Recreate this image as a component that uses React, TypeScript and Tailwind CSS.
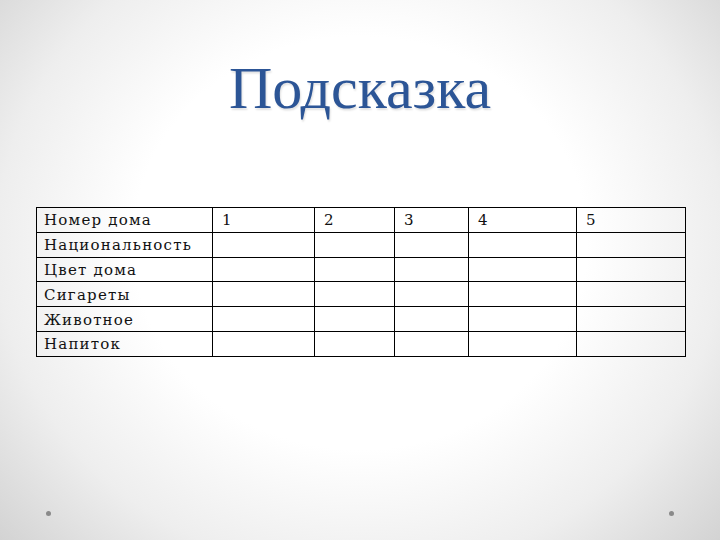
const rows = ['Номер дома', 'Национальность', 'Цвет дома', 'Сигареты', 'Животное', 'Напиток']
const head = ['1', '2', '3', '4', '5']
const widths = ['w-[176px]', 'w-[102px]', 'w-[80px]', 'w-[74px]', 'w-[108px]', 'w-[109px]']

const cell = "border border-black align-middle pt-[2px] font-['DejaVu_Serif',serif] text-[15px] leading-none tracking-[1.2px] text-[#111]"

export default function App() {
  return (
    <div className="relative flex h-[540px] w-[720px] flex-col overflow-hidden bg-[radial-gradient(ellipse_70%_85%_at_50%_45%,#ffffff_45%,#eeeeee_72%,#cfcfcf_100%)] font-['Liberation_Serif',serif]">
      <h1 className="mt-[56px] text-center text-[60px] leading-[64px] text-[#2c5596] [text-shadow:1px_2px_2px_rgba(0,0,0,0.12)] font-['Liberation_Serif',serif]">
        Подсказка
      </h1>

      <div className="mt-[87px] pl-[36px]">
        <table className="table-fixed border-collapse border border-black">
          <colgroup>
            {widths.map((w, i) => (
              <col key={i} className={w} />
            ))}
          </colgroup>
          <tbody>
            {rows.map((label, r) => (
              <tr key={label} className="h-[24.8px]">
                <td className={`${cell} px-[7px]`}>{label}</td>
                {head.map((n) => (
                  <td key={n} className={`${cell} px-[9px]`}>
                    {r === 0 ? n : ''}
                  </td>
                ))}
              </tr>
            ))}
          </tbody>
        </table>
      </div>

      {/* slide footer dots */}
      <div className="mt-auto mb-[24px] flex justify-between px-[46px]">
        <span className="h-[5px] w-[5px] rounded-full bg-[#8a8a8a]" />
        <span className="h-[5px] w-[5px] rounded-full bg-[#8a8a8a]" />
      </div>
    </div>
  )
}
